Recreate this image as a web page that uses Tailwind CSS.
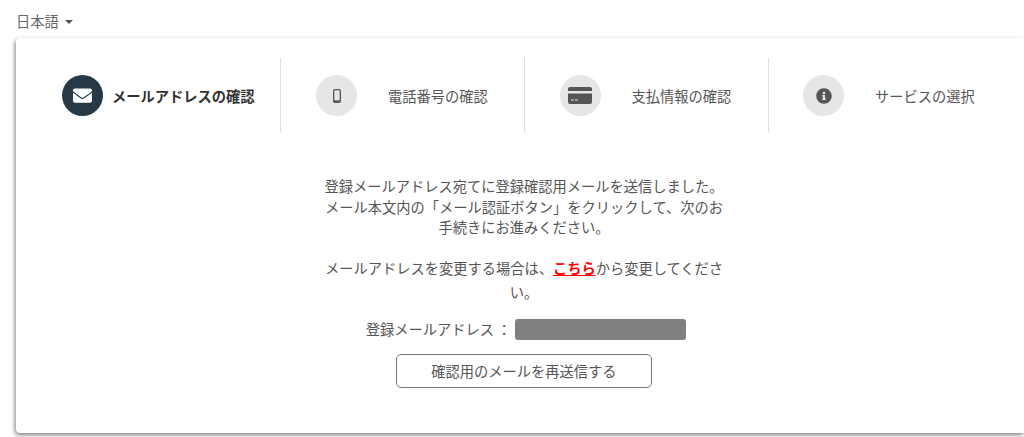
<!DOCTYPE html>
<html lang="ja">
<head>
    <meta charset="UTF-8">
    <meta name="viewport" content="width=device-width, initial-scale=1.0">
    <title>メールアドレスの確認</title>
    <script src="https://cdn.jsdelivr.net/npm/@tailwindcss/browser@4"></script>
</head>
<body class="bg-white h-[437px] overflow-hidden font-['Noto_Sans_CJK_JP','Noto_Sans',sans-serif] text-[14.25px] text-[#555] [text-spacing-trim:space-all]">
    <!-- Language switch -->
    <div class="h-[38px] pl-4 pt-[3px] flex items-center gap-[6px] text-[#666]">
        <span>日本語</span>
        <span class="w-0 h-0 border-x-4 border-x-transparent border-t-4 border-t-[#555] mt-[2px]"></span>
    </div>

    <!-- Card -->
    <div class="ml-4 w-[1008px] h-[395px] bg-white rounded-l-[4px] shadow-[-1px_2px_4px_rgba(0,0,0,0.5)] pt-5">
        <!-- Steps -->
        <div class="flex h-[75px] pl-[21.5px]">
            <div class="w-[243.5px] flex items-center pl-[24.5px] border-r border-[#ddd]">
                <div class="w-[41px] h-[41px] rounded-full bg-[#263945] flex items-center justify-center">
                    <svg class="w-[19px] h-[19px] fill-white" viewBox="0 0 512 512"><path d="M502.3 190.8c3.9-3.1 9.7-.2 9.7 4.7V400c0 26.5-21.5 48-48 48H48c-26.5 0-48-21.5-48-48V195.6c0-5 5.7-7.8 9.7-4.7 22.4 17.4 52.1 39.5 154.1 113.6 21.1 15.4 56.7 47.8 92.2 47.6 35.7.3 72-32.8 92.3-47.6 102-74.1 131.6-96.3 154-113.7zM256 320c23.2.4 56.6-29.2 73.4-41.4 132.7-96.3 142.8-104.7 173.4-128.7 5.8-4.5 9.2-11.5 9.2-18.9v-19c0-26.5-21.5-48-48-48H48C21.5 64 0 85.5 0 112v19c0 7.4 3.4 14.3 9.2 18.9 30.6 23.9 40.7 32.4 173.4 128.7 16.8 12.2 50.2 41.8 73.4 41.4z"/></svg>
                </div>
                <span class="ml-[9px] font-bold text-[#333]">メールアドレスの確認</span>
            </div>
            <div class="w-[243.5px] flex items-center pl-[35px] border-r border-[#ddd]">
                <div class="w-[41px] h-[41px] rounded-full bg-[#e6e6e6] flex items-center justify-center">
                    <svg class="w-2 h-[14px]" viewBox="0 0 8 14"><rect x="0.65" y="0.65" width="6.7" height="12.7" rx="1.3" fill="none" stroke="#555" stroke-width="1.3"/><rect x="1" y="11.3" width="6" height="1.6" fill="#555"/></svg>
                </div>
                <span class="ml-[31px]">電話番号の確認</span>
            </div>
            <div class="w-[244px] flex items-center pl-[35px] border-r border-[#ddd]">
                <div class="w-[41px] h-[41px] rounded-full bg-[#e6e6e6] flex items-center justify-center">
                    <svg class="w-6 h-[17px]" viewBox="0 0 24 17"><path d="M2 0h20a2 2 0 0 1 2 2v2H0V2a2 2 0 0 1 2-2z" fill="#555"/><path d="M0 6.5h24V15a2 2 0 0 1-2 2H2a2 2 0 0 1-2-2z" fill="#555"/><rect x="3" y="12.5" width="3" height="1" fill="#e6e6e6"/><rect x="7" y="12.5" width="3" height="1" fill="#e6e6e6"/></svg>
                </div>
                <span class="ml-[31px]">支払情報の確認</span>
            </div>
            <div class="w-[243.5px] flex items-center pl-[34.5px]">
                <div class="w-[41px] h-[41px] rounded-full bg-[#e6e6e6] flex items-center justify-center">
                    <svg class="w-4 h-4 fill-[#555]" viewBox="0 0 512 512"><path d="M256 8C119 8 8 119.043 8 256c0 137 111 248 248 248s248-111 248-248C504 119.043 393 8 256 8zm0 110c23.196 0 42 18.804 42 42s-18.804 42-42 42-42-18.804-42-42 18.804-42 42-42zm56 254c0 6.627-5.373 12-12 12h-88c-6.627 0-12-5.373-12-12v-24c0-6.627 5.373-12 12-12h12v-64h-12c-6.627 0-12-5.373-12-12v-24c0-6.627 5.373-12 12-12h64c6.627 0 12 5.373 12 12v100h12c6.627 0 12 5.373 12 12v24z"/></svg>
                </div>
                <span class="ml-[31px]">サービスの選択</span>
            </div>
        </div>

        <!-- Message -->
        <div class="w-[1016px] mt-[43px] flex flex-col items-center">
            <p class="w-[402px] text-center leading-[20.5px]">登録メールアドレス宛てに登録確認用メールを送信しました。メール本文内の「メール認証ボタン」をクリックして、次のお手続きにお進みください。</p>
            <p class="w-[402px] text-center leading-[24px] mt-[18px]">メールアドレスを変更する場合は、<a href="#" class="font-bold text-[#f00] underline">こちら</a>から変更してください。</p>
            <div class="flex items-center mt-[15px] ml-1 h-[21px]">
                <span>登録メールアドレス ：</span>
                <span class="ml-1 w-[171px] h-[21px] rounded-[3px] bg-[#808080]"></span>
            </div>
            <button class="mt-[14px] w-[256px] h-[34px] border border-[#777] rounded-[5px] bg-white text-[#555]">確認用のメールを再送信する</button>
        </div>
    </div>
</body>
</html>
